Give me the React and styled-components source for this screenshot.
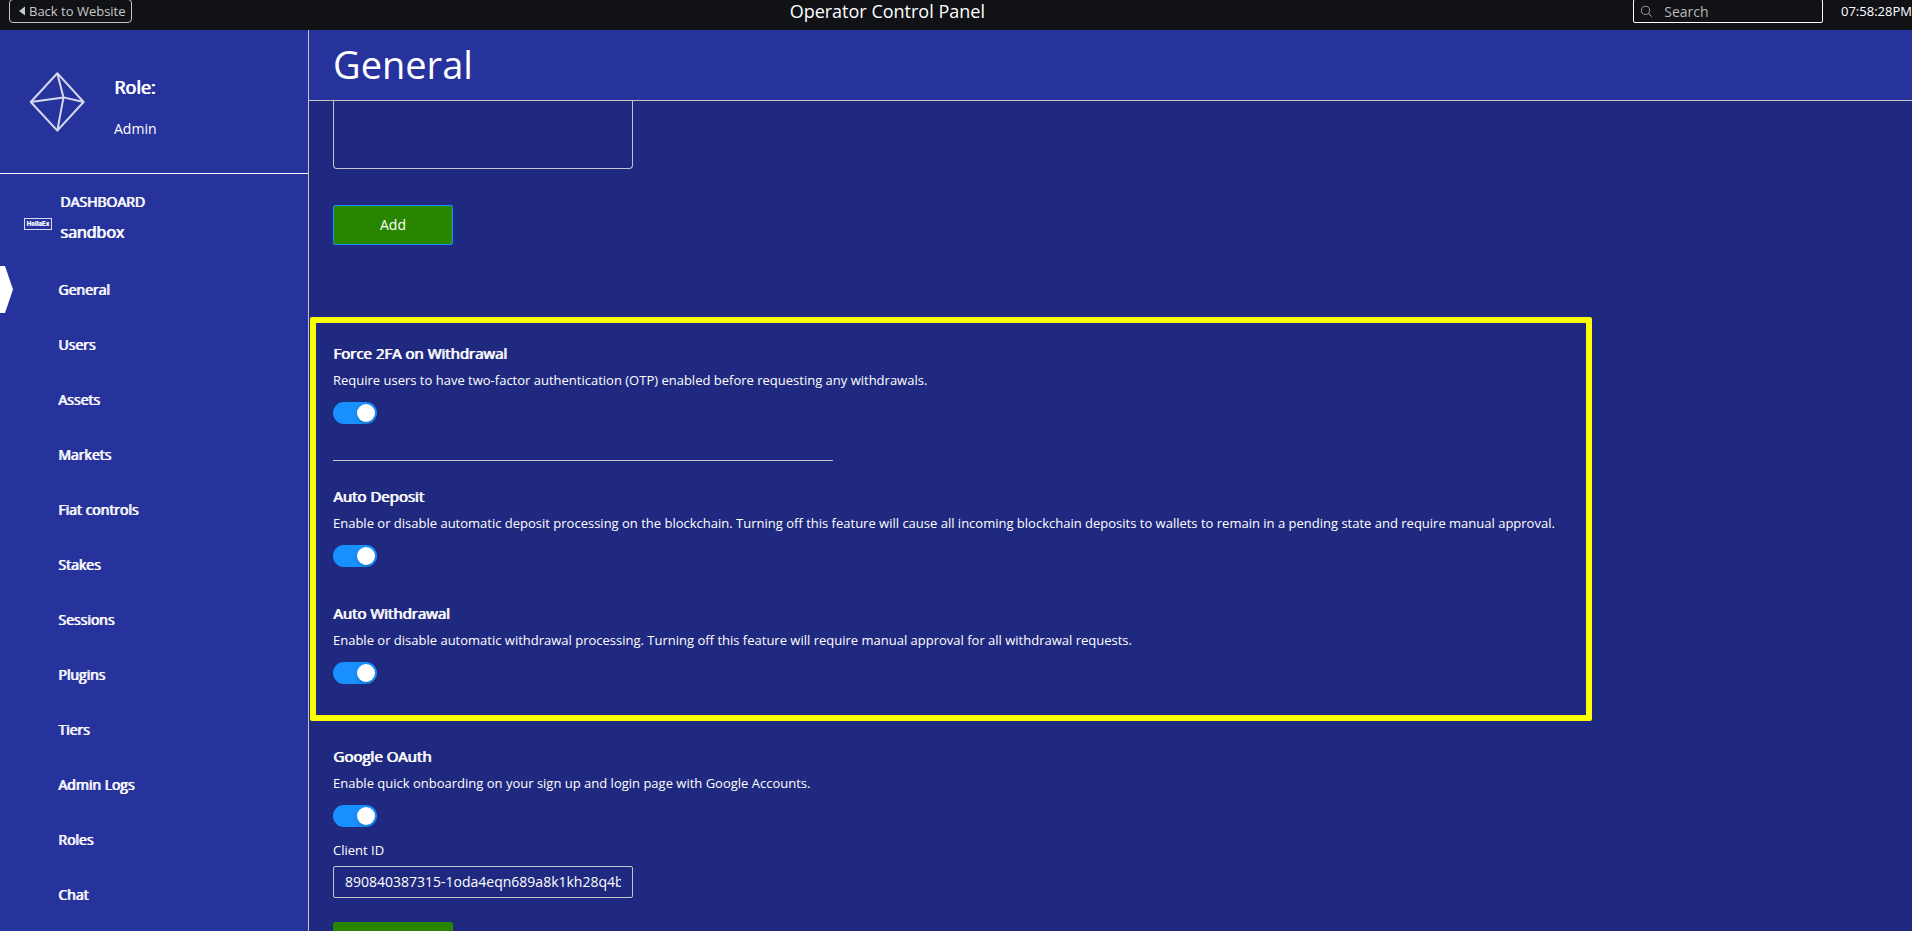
import { useState } from 'react';
import styled, { createGlobalStyle, css } from 'styled-components';

const GlobalStyle = createGlobalStyle`
  *, *::before, *::after {
    box-sizing: border-box;
  }

  body {
    margin: 0;
    background-color: #202980;
    color: #ffffff;
    font-family: 'Open Sans', sans-serif;
  }

  button, input, textarea {
    font-family: inherit;
  }
`;

const heavy = css`
  font-weight: 400;
  text-shadow: 1px 0 0 #ffffff;
`;

const Page = styled.div`
  display: flex;
  flex-direction: column;
  height: 100vh;
  overflow: hidden;
`;

const TopBar = styled.header`
  display: flex;
  flex: none;
  align-items: flex-end;
  justify-content: space-between;
  height: 30px;
  padding: 0 0 7px 9px;
  background-color: #101216;
`;

const BackButton = styled.button`
  display: flex;
  align-items: center;
  gap: 4px;
  height: 24px;
  padding: 0 5px 0 9px;
  border: 1px solid #c4c4c4;
  border-radius: 4px;
  background: transparent;
  color: #c9c9c9;
  font-size: 13px;
  line-height: 22px;
  cursor: pointer;
`;

const TopTitle = styled.div`
  padding-left: 10px;
  font-size: 18px;
  line-height: 23px;
`;

const TopRight = styled.div`
  display: flex;
  align-items: center;
  gap: 18px;
`;

const SearchBox = styled.label`
  display: flex;
  align-items: center;
  gap: 12px;
  width: 190px;
  height: 24px;
  padding: 0 7px;
  border: 1px solid #ffffff;
  border-radius: 2px;
`;

const SearchInput = styled.input`
  width: 100%;
  min-width: 0;
  padding: 0;
  border: none;
  outline: none;
  background: transparent;
  color: #ffffff;
  font-size: 14px;

  &::placeholder {
    color: #b8b8b8;
    opacity: 1;
  }
`;

const Clock = styled.div`
  width: 71px;
  font-size: 13px;
  line-height: 20px;
  white-space: nowrap;
`;

const Body = styled.div`
  display: flex;
  flex: 1;
  min-height: 0;
`;

const Sidebar = styled.aside`
  flex: none;
  width: 309px;
  border-right: 1px solid #c4c4c4;
  background-color: #27339d;
  overflow: hidden;
`;

const RolePanel = styled.div`
  display: flex;
  align-items: center;
  gap: 29px;
  height: 144px;
  padding-left: 29px;
  border-bottom: 1px solid #ffffff;
`;

const RoleText = styled.div`
  display: flex;
  flex-direction: column;
  gap: 18px;
  padding-top: 13px;
`;

const RoleLabel = styled.div`
  ${heavy}
  font-size: 18px;
  line-height: 24px;
`;

const RoleName = styled.div`
  font-size: 14px;
  line-height: 24px;
`;

const Exchange = styled.a`
  display: flex;
  align-items: flex-end;
  gap: 8px;
  padding: 13px 0 0 24px;
  color: #ffffff;
  text-decoration: none;

  svg {
    margin-bottom: 17px;
  }
`;

const ExchangeText = styled.div`
  ${heavy}
  font-size: ${({ $large }) => ($large ? '16px' : '14px')};
  line-height: 30px;
`;

const Nav = styled.nav`
  display: flex;
  flex-direction: column;
  padding-top: 15px;
`;

const NavItem = styled.a`
  ${heavy}
  display: flex;
  align-items: center;
  height: 55px;
  color: #ffffff;
  font-size: 14px;
  text-decoration: none;

  &::before {
    content: '';
    width: 13px;
    height: 47px;
    margin-right: 45px;
    background-color: ${({ $active }) => ($active ? '#ffffff' : 'transparent')};
    clip-path: polygon(0 0, 5px 0, 100% 50%, 5px 100%, 0 100%);
  }
`;

const Main = styled.main`
  display: flex;
  flex: 1;
  flex-direction: column;
  min-width: 0;
`;

const PageHeader = styled.div`
  flex: none;
  height: 71px;
  padding-left: 24px;
  border-bottom: 1px solid #c4c4c4;
  background-color: #27339d;
`;

const PageTitle = styled.h1`
  margin: 0;
  font-size: 38px;
  font-weight: 400;
  line-height: 68px;
`;

const Content = styled.div`
  flex: 1;
  min-height: 0;
  overflow: hidden;
`;

const Block = styled.section`
  padding: 0 24px;
`;

const Notes = styled.textarea`
  display: block;
  width: 300px;
  height: 68px;
  margin-bottom: 36px;
  border: 1px solid #c4c4c4;
  border-top: none;
  border-radius: 0 0 4px 4px;
  outline: none;
  background: transparent;
  color: #ffffff;
  resize: none;
`;

const GreenButton = styled.button`
  display: block;
  width: 120px;
  height: 40px;
  padding: 0;
  border: 1px solid ${({ $focused }) => ($focused ? '#1890ff' : '#288500')};
  border-radius: 2px;
  background-color: #288500;
  color: #ffffff;
  font-size: 14px;
  line-height: 16px;
  cursor: pointer;
`;

const Highlight = styled.div`
  display: flex;
  flex-direction: column;
  margin: 72px 320px 23px 1px;
  padding: 18px 17px 31px;
  border: 6px solid #fbff00;
  border-radius: 2px;
`;

const Setting = styled.div`
  display: flex;
  flex-direction: column;
  align-items: flex-start;
`;

const SettingTitle = styled.h2`
  ${heavy}
  margin: 0;
  font-size: 15px;
  line-height: 24px;
`;

const SettingText = styled.p`
  margin: 3px 0 10px;
  font-size: 13px;
  line-height: 24px;
`;

const Divider = styled.hr`
  width: 500px;
  max-width: 100%;
  margin: 36px 0 23px;
  border: none;
  border-top: 1px solid #c4c4c4;
`;

const Spacer = styled.div`
  height: 34px;
`;

const Switch = styled.input`
  width: 44px;
  height: 22px;
  margin: 0;
  padding: 2px;
  border-radius: 11px;
  background-color: ${({ checked }) => (checked ? '#1890ff' : '#8c8c8c')};
  appearance: none;
  cursor: pointer;

  &::before {
    content: '';
    display: block;
    width: 18px;
    height: 18px;
    margin-left: ${({ checked }) => (checked ? '22px' : '0')};
    border-radius: 50%;
    background-color: #ffffff;
    box-shadow: 0 2px 4px rgba(0, 35, 11, 0.2);
  }
`;

const FieldLabel = styled.label`
  margin-top: 11px;
  font-size: 13px;
  line-height: 24px;
`;

const Field = styled.input`
  width: 300px;
  height: 32px;
  margin: 4px 0 24px;
  padding: 4px 11px 5px;
  border: 1px solid #c4c4c4;
  border-radius: 2px;
  outline: none;
  background: transparent;
  color: #ffffff;
  font-size: 14px;
`;

const navItems = [
  'General',
  'Users',
  'Assets',
  'Markets',
  'Fiat controls',
  'Stakes',
  'Sessions',
  'Plugins',
  'Tiers',
  'Admin Logs',
  'Roles',
  'Chat',
];

const CaretLeft = () => (
  <svg width="6" height="10" viewBox="0 0 6 10" fill="currentColor" aria-hidden="true">
    <path d="M6 0.5V9.5L0 5z" />
  </svg>
);

const SearchIcon = () => (
  <svg width="13" height="13" viewBox="0 0 13 13" fill="none" stroke="#c4c4c4" aria-hidden="true">
    <circle cx="5.2" cy="5.2" r="4.7" strokeWidth="0.9" />
    <path d="M8.6 8.6L12.6 12.6" strokeWidth="1.1" />
  </svg>
);

const RoleIcon = () => (
  <svg width="56" height="60" viewBox="0 0 56 60" fill="none" stroke="#d7d9ee" strokeWidth="2" strokeLinejoin="round" aria-hidden="true">
    <path d="M28.3 1.2L54.6 30L28.3 58.6L1.8 30z" />
    <path d="M1.8 30L34.5 25.4L54.6 30" />
    <path d="M28.3 1.2L34.5 25.4L28.3 58.6" />
  </svg>
);

const ExchangeLogo = () => (
  <svg width="28" height="12" viewBox="0 0 28 12" aria-hidden="true">
    <rect x="0.5" y="0.5" width="27" height="11" fill="none" stroke="#d7d9ee" />
    <text x="14" y="8" fill="#ffffff" fontFamily="Inter, sans-serif" fontSize="6" fontWeight="900" textAnchor="middle">
      HollaEx
    </text>
  </svg>
);

const SettingRow = ({ id, title, text, children }) => {
  const [enabled, setEnabled] = useState(true);

  return (
    <Setting>
      <SettingTitle id={id}>{title}</SettingTitle>
      <SettingText>{text}</SettingText>
      <Switch
        type="checkbox"
        role="switch"
        aria-labelledby={id}
        checked={enabled}
        onChange={(e) => setEnabled(e.target.checked)}
      />
      {children}
    </Setting>
  );
};

const App = () => {
  const [active, setActive] = useState('General');
  const [clientId, setClientId] = useState('890840387315-1oda4eqn689a8k1kh28q4b');

  return (
    <Page>
      <GlobalStyle />
      <TopBar>
        <BackButton type="button">
          <CaretLeft />
          Back to Website
        </BackButton>
        <TopTitle>Operator Control Panel</TopTitle>
        <TopRight>
          <SearchBox>
            <SearchIcon />
            <SearchInput type="text" placeholder="Search" aria-label="Search" />
          </SearchBox>
          <Clock>07:58:28PM</Clock>
        </TopRight>
      </TopBar>
      <Body>
        <Sidebar>
          <RolePanel>
            <RoleIcon />
            <RoleText>
              <RoleLabel>Role:</RoleLabel>
              <RoleName>Admin</RoleName>
            </RoleText>
          </RolePanel>
          <Exchange href="#dashboard">
            <ExchangeLogo />
            <div>
              <ExchangeText>DASHBOARD</ExchangeText>
              <ExchangeText $large>sandbox</ExchangeText>
            </div>
          </Exchange>
          <Nav>
            {navItems.map((item) => (
              <NavItem key={item} href="#" $active={item === active} onClick={() => setActive(item)}>
                {item}
              </NavItem>
            ))}
          </Nav>
        </Sidebar>
        <Main>
          <PageHeader>
            <PageTitle>General</PageTitle>
          </PageHeader>
          <Content>
            <Block>
              <Notes aria-label="Notes" />
              <GreenButton type="button" $focused>
                Add
              </GreenButton>
            </Block>
            <Highlight>
              <SettingRow
                id="force-2fa"
                title="Force 2FA on Withdrawal"
                text="Require users to have two-factor authentication (OTP) enabled before requesting any withdrawals."
              />
              <Divider />
              <SettingRow
                id="auto-deposit"
                title="Auto Deposit"
                text="Enable or disable automatic deposit processing on the blockchain. Turning off this feature will cause all incoming blockchain deposits to wallets to remain in a pending state and require manual approval."
              />
              <Spacer />
              <SettingRow
                id="auto-withdrawal"
                title="Auto Withdrawal"
                text="Enable or disable automatic withdrawal processing. Turning off this feature will require manual approval for all withdrawal requests."
              />
            </Highlight>
            <Block>
              <SettingRow
                id="google-oauth"
                title="Google OAuth"
                text="Enable quick onboarding on your sign up and login page with Google Accounts."
              >
                <FieldLabel htmlFor="client-id">Client ID</FieldLabel>
                <Field
                  id="client-id"
                  type="text"
                  value={clientId}
                  onChange={(e) => setClientId(e.target.value)}
                />
                <GreenButton type="button" aria-label="Save" />
              </SettingRow>
            </Block>
          </Content>
        </Main>
      </Body>
    </Page>
  );
};

export default App;
